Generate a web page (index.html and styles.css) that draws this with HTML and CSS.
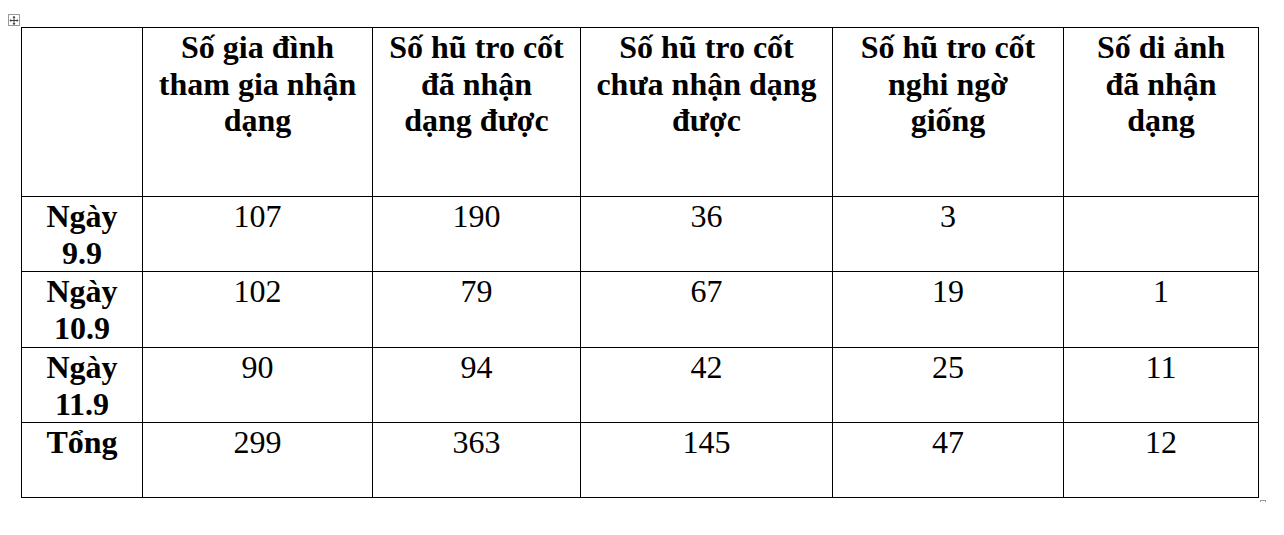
FILE: index.html
```html
<!DOCTYPE html>
<html lang="vi">
<head>
<meta charset="utf-8">
<title>Bảng nhận dạng</title>
<link rel="stylesheet" href="styles.css">
</head>
<body>
<div class="page">
  <div class="table-wrap">
    <span class="move-handle">
      <svg width="11" height="11" viewBox="0 0 11 11">
        <path d="M5.5 1 V10 M1 5.5 H10" stroke="#333" stroke-width="1" fill="none"/>
        <path d="M5.5 0.5 L3.8 2.4 H7.2 Z M5.5 10.5 L3.8 8.6 H7.2 Z M0.5 5.5 L2.4 3.8 V7.2 Z M10.5 5.5 L8.6 3.8 V7.2 Z" fill="#333"/>
      </svg>
    </span>
    <table class="data">
      <colgroup>
        <col class="c0"><col class="c1"><col class="c2"><col class="c3"><col class="c4"><col class="c5">
      </colgroup>
      <tr class="head">
        <th></th>
        <th>Số gia đình<br>tham gia nhận<br>dạng</th>
        <th>Số hũ tro cốt<br>đã nhận<br>dạng được</th>
        <th>Số hũ tro cốt<br>chưa nhận dạng<br>được</th>
        <th>Số hũ tro cốt<br>nghi ngờ<br>giống</th>
        <th>Số di ảnh<br>đã nhận<br>dạng</th>
      </tr>
      <tr class="row">
        <th>Ngày<br>9.9</th><td>107</td><td>190</td><td>36</td><td>3</td><td></td>
      </tr>
      <tr class="row row-tall">
        <th>Ngày<br>10.9</th><td>102</td><td>79</td><td>67</td><td>19</td><td>1</td>
      </tr>
      <tr class="row">
        <th>Ngày<br>11.9</th><td>90</td><td>94</td><td>42</td><td>25</td><td>11</td>
      </tr>
      <tr class="row">
        <th>Tổng</th><td>299</td><td>363</td><td>145</td><td>47</td><td>12</td>
      </tr>
    </table>
    <span class="resize-handle"></span>
  </div>
</div>
</body>
</html>
```
FILE: styles.css
```css
html, body {
  margin: 0;
  padding: 0;
  background: #ffffff;
}

.page {
  padding: 27px 0 0 21px;
}

.table-wrap {
  position: relative;
  display: inline-block;
}

.move-handle {
  position: absolute;
  left: -13px;
  top: -13px;
  width: 12px;
  height: 12px;
  border: 1px solid #9a9a9a;
  background: #fff;
  box-sizing: border-box;
  display: flex;
  align-items: center;
  justify-content: center;
}

.move-handle svg {
  display: block;
}

.resize-handle {
  position: absolute;
  right: -7px;
  bottom: -8px;
  width: 6px;
  height: 6px;
  border: 1px solid #9a9a9a;
  box-sizing: border-box;
  background: #fff;
}

.data {
  border-collapse: collapse;
  table-layout: fixed;
  width: 1238px;
  font-family: "Liberation Serif", "Times New Roman", serif;
  font-size: 32px;
  line-height: 36.5px;
  color: #000;
}

.c0 { width: 121px; }
.c1 { width: 230px; }
.c2 { width: 208px; }
.c3 { width: 252px; }
.c4 { width: 231px; }
.c5 { width: 195px; }

.data th,
.data td {
  border: 1px solid #000;
  padding: 1px 7px 0;
  text-align: center;
  vertical-align: top;
}

.data th {
  font-weight: bold;
}

.data td {
  font-weight: normal;
}

.head th {
  height: 167px;
}

.row th,
.row td {
  height: 73px;
}

.row-tall th,
.row-tall td {
  height: 74px;
}
```
